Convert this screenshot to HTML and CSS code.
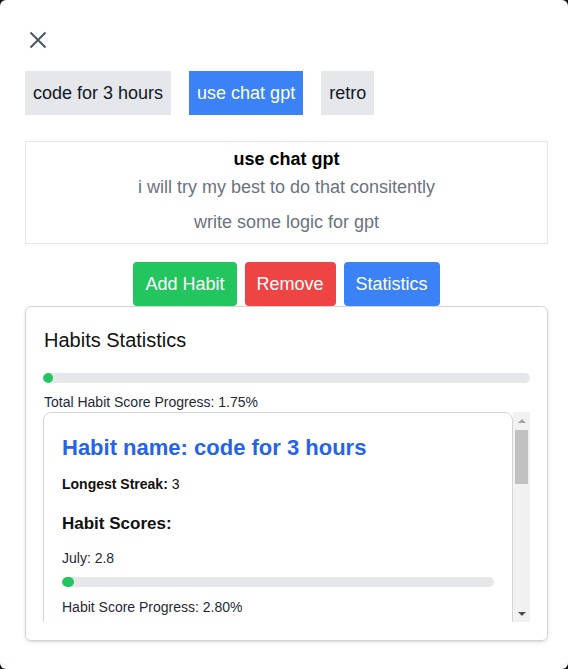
FILE: index.html
```html
<!DOCTYPE html>
<html lang="en">
<head>
<meta charset="utf-8">
<title>Habits</title>
<link rel="stylesheet" href="styles.css">
</head>
<body>
<div class="modal">
  <button class="close" aria-label="Close">
    <svg width="24" height="24" viewBox="0 0 24 24" fill="none" stroke="#4b5563" stroke-width="2" stroke-linecap="butt"><path d="M4.5 4.5L19.5 19.5M19.5 4.5L4.5 19.5"/></svg>
  </button>

  <div class="tags">
    <span class="tag">code for 3 hours</span>
    <span class="tag active">use chat gpt</span>
    <span class="tag">retro</span>
  </div>

  <div class="detail">
    <h2 class="detail-title">use chat gpt</h2>
    <p class="detail-desc">i will try my best to do that consitently</p>
    <p class="detail-desc second">write some logic for gpt</p>
  </div>

  <div class="actions">
    <button class="btn green">Add Habit</button>
    <button class="btn red">Remove</button>
    <button class="btn blue">Statistics</button>
  </div>

  <div class="stats">
    <h3 class="stats-title">Habits Statistics</h3>
    <div class="bar"><div class="fill" style="width:1.75%"></div></div>
    <p class="small total">Total Habit Score Progress: 1.75%</p>
    <div class="scroll">
      <div class="viewport">
        <div class="item">
          <h4 class="item-name">Habit name: code for 3 hours</h4>
          <p class="small streak"><b>Longest Streak:</b> 3</p>
          <h5 class="scores">Habit Scores:</h5>
          <p class="small month">July: 2.8</p>
          <div class="bar inner"><div class="fill" style="width:2.8%"></div></div>
          <p class="small prog">Habit Score Progress: 2.80%</p>
        </div>
      </div>
      <div class="sbar" aria-hidden="true">
        <div class="sb-btn up"><span class="tri-up"></span></div>
        <div class="sb-track"><div class="sb-thumb"></div></div>
        <div class="sb-btn down"><span class="tri-down"></span></div>
      </div>
    </div>
  </div>
</div>
</body>
</html>
```

FILE: styles.css
```css
* { box-sizing: border-box; }
html, body { margin: 0; padding: 0; }
body {
  background: #0b0f0c;
  font-family: "Liberation Sans", Arial, sans-serif;
  color: #111827;
  width: 568px;
  height: 669px;
  overflow: hidden;
}
h2, h3, h4, h5, p { margin: 0; }

.modal {
  width: 568px;
  height: 669px;
  background: #fff;
  border-radius: 6px;
  padding: 28px 20px 0 25px;
}

.close {
  display: block;
  border: 0;
  background: none;
  padding: 0;
  margin-left: 1px;
  width: 24px;
  height: 24px;
  cursor: pointer;
}
.close svg { display: block; }

.tags {
  display: flex;
  gap: 18px;
  margin-top: 19px;
}
.tag {
  background: #e5e7eb;
  color: #111827;
  font-size: 18px;
  line-height: 28px;
  padding: 8px 8px;
}
.tag.active {
  background: #3b82f6;
  color: #fff;
}

.detail {
  margin-top: 26px;
  border: 1px solid #e5e7eb;
  padding: 3px 8px 7px;
  text-align: center;
}
.detail-title {
  font-size: 18px;
  line-height: 28px;
  font-weight: 700;
  color: #000;
}
.detail-desc {
  font-size: 18px;
  line-height: 28px;
  color: #6b7280;
}
.detail-desc.second { margin-top: 7px; }

.actions {
  display: flex;
  justify-content: center;
  gap: 8px;
  margin-top: 18px;
}
.btn {
  font-family: inherit;
  font-size: 18px;
  line-height: 28px;
  padding: 8px 12px;
  border: 0;
  border-radius: 4px;
  color: #fff;
  cursor: pointer;
}
.btn.green { background: #22c55e; }
.btn.red { background: #ef4444; }
.btn.blue { background: #3b82f6; }

.stats {
  border: 1px solid #d1d5db;
  border-radius: 6px;
  box-shadow: 0 2px 4px rgba(0,0,0,0.08), 0 1px 2px rgba(0,0,0,0.06);
  padding: 19px 17px 18px 17px;
  height: 335px;
  display: flex;
  flex-direction: column;
}
.stats-title {
  font-size: 20px;
  line-height: 28px;
  font-weight: 400;
  color: #111;
  padding-left: 1px;
}
.bar {
  height: 10px;
  background: #e5e7eb;
  border-radius: 9999px;
  margin-top: 19px;
  overflow: hidden;
  flex: none;
}
.fill {
  height: 100%;
  min-width: 10px;
  background: #22c55e;
  border-radius: 9999px;
}
.small {
  font-size: 14px;
  line-height: 20px;
  color: #1f2937;
}
.total { margin-top: 9px; padding-left: 1px; }

.scroll {
  flex: 1;
  min-height: 0;
  display: flex;
}
.viewport {
  flex: 1;
  min-width: 0;
  overflow: hidden;
}
.item {
  border: 1px solid #d1d5db;
  border-radius: 8px;
  padding: 19px 18px 18px;
  height: 260px;
}
.item-name {
  font-size: 22px;
  line-height: 32px;
  font-weight: 700;
  color: #2563eb;
}
.streak { margin-top: 10px; color: #111; }
.scores {
  margin-top: 16px;
  font-size: 17px;
  line-height: 28px;
  font-weight: 700;
  color: #111;
}
.month { margin-top: 10px; }
.bar.inner { margin-top: 9px; }
.prog { margin-top: 10px; }

.sbar {
  width: 17px;
  flex: none;
  background: #f1f1f1;
  display: flex;
  flex-direction: column;
}
.sb-btn {
  height: 17px;
  flex: none;
  display: flex;
  align-items: center;
  justify-content: center;
}
.tri-up {
  width: 0; height: 0;
  border-left: 4px solid transparent;
  border-right: 4px solid transparent;
  border-bottom: 4px solid #a3a3a3;
}
.tri-down {
  width: 0; height: 0;
  border-left: 4px solid transparent;
  border-right: 4px solid transparent;
  border-top: 4px solid #505050;
}
.sb-track {
  flex: 1;
  padding: 1px 2px;
}
.sb-thumb {
  height: 54px;
  background: #c1c1c1;
}
```
